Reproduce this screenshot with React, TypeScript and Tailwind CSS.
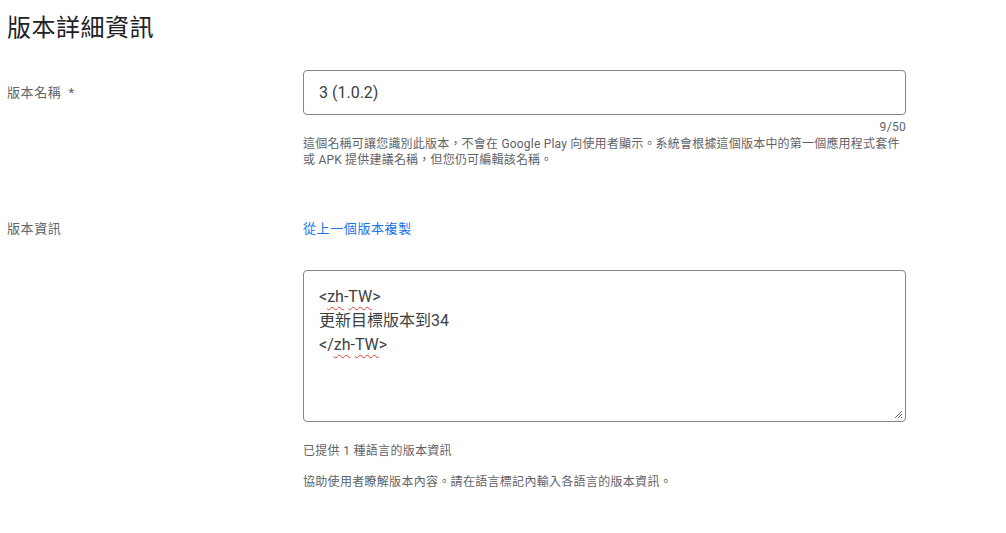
const font = { fontFamily: 'Roboto, "Noto Sans CJK TC", sans-serif' };

// spellcheck-style squiggle under a word
const Squiggle = ({ children }: { children: React.ReactNode }) => (
    <span className="underline decoration-wavy decoration-[#e53935] decoration-[1.2px] underline-offset-[4px]">
        {children}
    </span>
);

const App = () => {
    return (
        <div className="w-[1006px] h-[533px] bg-white pl-[7px] pt-[12px]" style={font}>
            <h1 className="text-[24px] leading-[32px] text-[#202124] tracking-[0.5px]">
                版本詳細資訊
            </h1>

            {/* version name */}
            <div className="grid grid-cols-[296px_603px] mt-[26px]">
                <div className="flex items-center h-[45px] text-[13px] text-[#5f6368] tracking-[0.6px]">
                    版本名稱 <span className="ml-[7px]">*</span>
                </div>
                <div>
                    <div className="h-[45px] border border-[#80868b] rounded-[4px] flex items-center px-[15px] text-[16px] text-[#3c4043]">
                        3 (1.0.2)
                    </div>
                    <p className="text-right text-[12px] leading-[16px] text-[#5f6368] mt-[4px] tracking-[0.3px]">
                        9/50
                    </p>
                    <p className="text-[12px] leading-[16px] text-[#5f6368] tracking-[0.2px] mt-[1px] whitespace-nowrap">
                        這個名稱可讓您識別此版本，不會在 Google Play 向使用者顯示。系統會根據這個版本中的第一個應用程式套件
                        <br />
                        或 APK 提供建議名稱，但您仍可編輯該名稱。
                    </p>
                </div>
            </div>

            {/* release notes */}
            <div className="grid grid-cols-[296px_603px] mt-[51px]">
                <div className="text-[13px] leading-[20px] text-[#5f6368] tracking-[0.6px]">
                    版本資訊
                </div>
                <div>
                    <p className="text-[13px] leading-[20px] text-[#1a73e8] tracking-[0.6px]">
                        從上一個版本複製
                    </p>
                    <div className="relative mt-[31px] h-[152px] border border-[#80868b] rounded-[4px] px-[15px] pt-[14px] text-[16px] leading-[24px] text-[#3c4043]">
                        <div>
                            &lt;<Squiggle>zh</Squiggle>-<Squiggle>TW</Squiggle>&gt;
                        </div>
                        <div>更新目標版本到34</div>
                        <div>
                            &lt;/<Squiggle>zh</Squiggle>-<Squiggle>TW</Squiggle>&gt;
                        </div>
                        <svg
                            className="absolute right-[2px] bottom-[2px]"
                            width="9"
                            height="9"
                            viewBox="0 0 9 9"
                        >
                            <path d="M8 1 L1 8 M8 4 L4 8 M8 7 L7 8" stroke="#6b6b6b" strokeWidth="1" />
                        </svg>
                    </div>
                    <p className="text-[12px] leading-[16px] text-[#5f6368] tracking-[0.3px] mt-[21px]">
                        已提供 1 種語言的版本資訊
                    </p>
                    <p className="text-[12px] leading-[16px] text-[#5f6368] tracking-[0.3px] mt-[15px]">
                        協助使用者瞭解版本內容。請在語言標記內輸入各語言的版本資訊。
                    </p>
                </div>
            </div>
        </div>
    );
};

export default App;
